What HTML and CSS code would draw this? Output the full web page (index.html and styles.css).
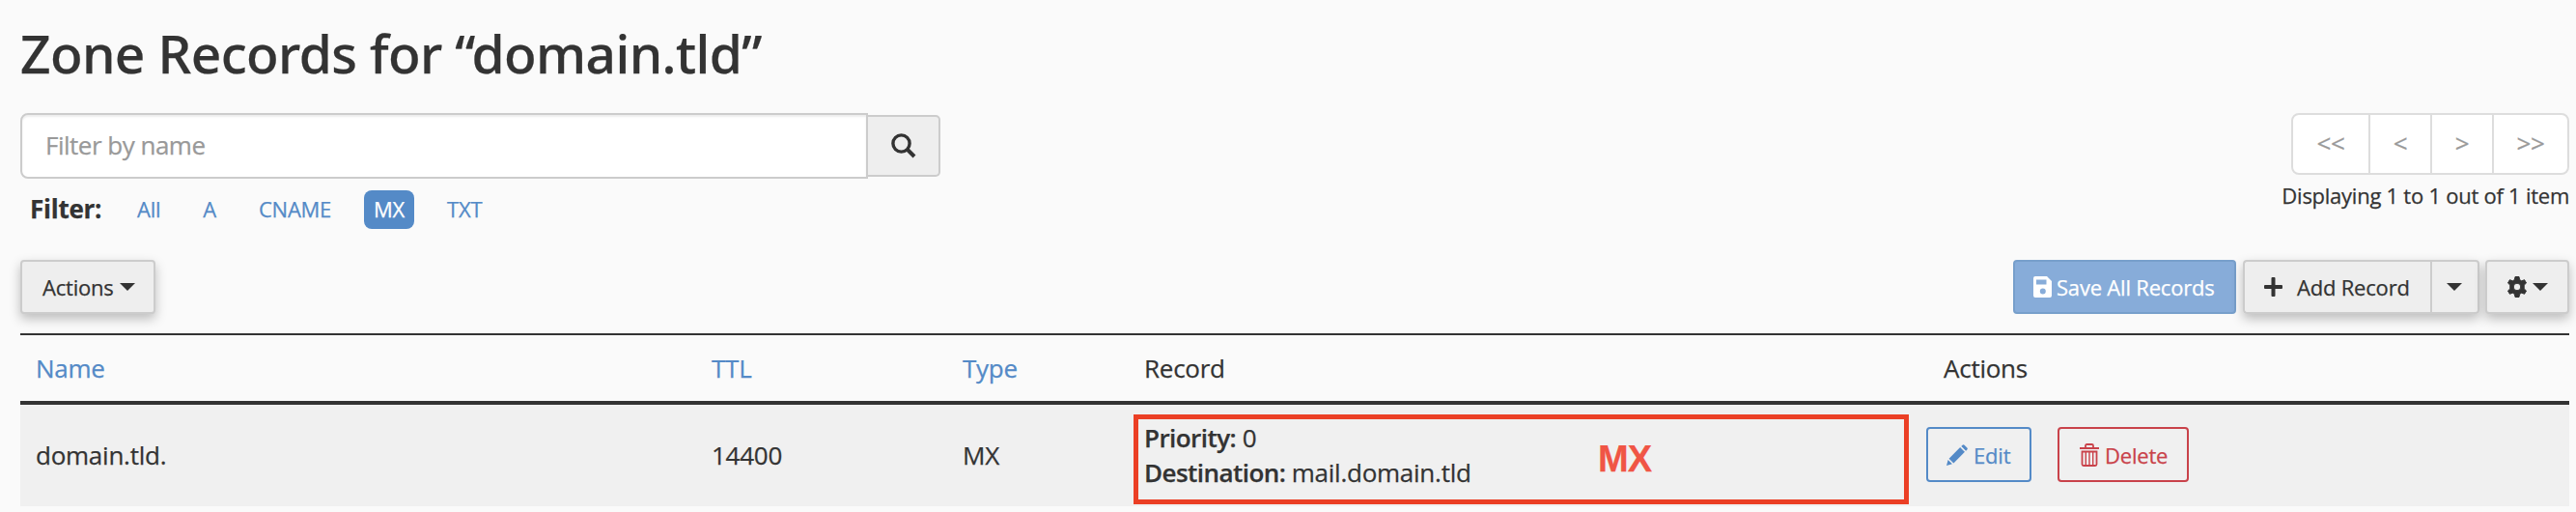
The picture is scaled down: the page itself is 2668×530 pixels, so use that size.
FILE: index.html
```html
<!DOCTYPE html>
<html lang="en">
<head>
    <meta charset="UTF-8">
    <meta name="viewport" content="width=device-width, initial-scale=1.0">
    <title>Zone Records</title>
    <link rel="stylesheet" href="styles.css">
</head>
<body>
    <div class="container">
        <h1>Zone Records for “domain.tld”</h1>

        <div class="top-section">
            <div class="search-section">
                <div class="search-group">
                    <input type="text" id="filterInput" placeholder="Filter by name">
                    <button class="search-btn" aria-label="Search">
                        <svg width="26" height="26" viewBox="0 0 26 26"><circle cx="10.500" cy="10.500" r="8.600" fill="none" stroke="#333" stroke-width="3.400"/><path d="M16.500 16.500L24 24" stroke="#333" stroke-width="4"/></svg>
                    </button>
                </div>
                <div class="filters">
                    <strong>Filter:</strong>
                    <a>All</a>
                    <a>A</a>
                    <a>CNAME</a>
                    <a class="active">MX</a>
                    <a>TXT</a>
                </div>
            </div>
            <div class="paging">
                <div class="pagination">
                    <span class="wide">&lt;&lt;</span>
                    <span>&lt;</span>
                    <span>&gt;</span>
                    <span class="wide">&gt;&gt;</span>
                </div>
                <div class="page-info">Displaying 1 to 1 out of 1 item</div>
            </div>
        </div>

        <div class="toolbar">
            <button class="btn actions-btn">Actions <i class="caret"></i></button>
            <div class="toolbar-right">
                <button class="btn btn-primary" disabled>
                    <svg width="19" height="22" viewBox="0 0 19 22"><path fill="#fff" fill-rule="evenodd" d="M2 0H14L19 5V20Q19 22 17 22H2Q0 22 0 20V2Q0 0 2 0ZM3 3.500V8.500H13.500V3.500ZM9.800 12.500A3 3 0 1 0 9.800 18.500A3 3 0 1 0 9.800 12.500Z"/></svg>
                    <span>Save All Records</span>
                </button>
                <div class="btn-group">
                    <button class="btn add-btn">
                        <svg width="19" height="20" viewBox="0 0 19 20"><path fill="#333" d="M7.500 1Q7.500 0 8.500 0H10.500Q11.500 0 11.500 1V8H18Q19 8 19 9V11Q19 12 18 12H11.500V19Q11.500 20 10.500 20H8.500Q7.500 20 7.500 19V12H1Q0 12 0 11V9Q0 8 1 8H7.500Z"/></svg>
                        <span>Add Record</span>
                    </button>
                    <button class="btn drop-btn"><i class="caret"></i></button>
                </div>
                <button class="btn gear-btn">
                    <svg width="20" height="22" viewBox="0 0 20 22"><path fill="#333" fill-rule="evenodd" stroke="#333" stroke-width="1" stroke-linejoin="round" d="M8 .5H12L12.600 3.600L14.600 4.800L17.600 3.700L19.500 7L17.200 9.100V12.900L19.500 15L17.600 18.300L14.600 17.200L12.600 18.400L12 21.500H8L7.400 18.400L5.400 17.200L2.400 18.300L.5 15L2.800 12.900V9.100L.5 7L2.400 3.700L5.400 4.800L7.400 3.600ZM10 7.200A3.800 3.800 0 1 0 10 14.800A3.800 3.800 0 1 0 10 7.200Z"/></svg>
                    <i class="caret"></i>
                </button>
            </div>
        </div>

        <table>
            <colgroup>
                <col class="col-name">
                <col class="col-ttl">
                <col class="col-type">
                <col class="col-record">
                <col>
            </colgroup>
            <thead>
                <tr>
                    <th><a>Name</a></th>
                    <th><a>TTL</a></th>
                    <th><a>Type</a></th>
                    <th>Record</th>
                    <th class="actions-head">Actions</th>
                </tr>
            </thead>
            <tbody>
                <tr>
                    <td>domain.tld.</td>
                    <td>14400</td>
                    <td>MX</td>
                    <td class="record">
                        <div><strong>Priority:</strong> 0</div>
                        <div><strong>Destination:</strong> mail.domain.tld</div>
                        <div class="highlight">MX</div>
                    </td>
                    <td class="row-actions">
                        <div class="action-group">
                            <button class="btn-outline edit">
                                <svg width="22" height="22" viewBox="0 0 23 23"><path fill="#548ac7" d="M0 23L1.700 16.800L6.200 21.300ZM2.700 15.300L14.800 3.200L19.800 8.200L7.700 20.300ZM16 2L17.300 .7Q18.300 -.3 19.400 .7L22.300 3.600Q23.300 4.700 22.300 5.700L21 7Z"/></svg>
                                <span>Edit</span>
                            </button>
                            <button class="btn-outline delete">
                                <svg width="20" height="24" viewBox="0 0 20 24"><g fill="none" stroke="#c9424a"><path stroke-width="1.800" d="M0 5H20M6 5V2.500Q6 1 7.500 1H12.500Q14 1 14 2.500V5M2.500 8.500V21.500Q2.500 23 4 23H16Q17.500 23 17.500 21.500V8.500Z"/><path stroke-width="1.400" d="M6.300 9V22M10 9V22M13.700 9V22"/></g></svg>
                                <span>Delete</span>
                            </button>
                        </div>
                    </td>
                </tr>
            </tbody>
        </table>
    </div>
</body>
</html>
```
FILE: styles.css
```css
* {
    box-sizing: border-box;
}
body {
    margin: 0;
    background: #fafafa;
    color: #333;
    font-family: "Open Sans", "Noto Sans", sans-serif;
    font-size: 26px;
    line-height: 36px;
    letter-spacing: -0.25px;
    -webkit-text-stroke: 0.25px;
}
.container {
    padding: 24px 7px 0 21px;
}
h1 {
    margin: 0 0 31px;
    font-family: "Noto Sans", "Open Sans", sans-serif;
    font-size: 55px;
    font-weight: 500;
    line-height: 62px;
    letter-spacing: -0.6px;
}
strong {
    font-weight: 600;
}
button {
    font-family: inherit;
    color: #333;
    margin: 0;
    letter-spacing: -0.2px;
    white-space: nowrap;
    cursor: pointer;
}
svg {
    display: block;
    flex-shrink: 0;
}
a {
    color: #548ac7;
}
.top-section {
    display: flex;
    justify-content: space-between;
    height: 152px;
}
.search-group {
    display: flex;
    align-items: center;
}
input {
    width: 878px;
    height: 68px;
    padding: 0 24px 2px;
    border: 2px solid #ccc;
    border-radius: 8px 0 0 8px;
    background: #fff;
    box-shadow: inset 0 2px 2px rgba(0, 0, 0, 0.075);
    font-family: inherit;
    font-size: 26px;
    letter-spacing: -0.5px;
}
input::placeholder {
    color: #999;
}
.search-btn {
    width: 75px;
    height: 64px;
    padding: 0 0 0 24px;
    border: 2px solid #ccc;
    border-left: none;
    border-radius: 0 5px 5px 0;
    background: #eee;
}
.filters {
    display: flex;
    align-items: center;
    gap: 24px;
    margin-top: 12px;
    padding-left: 10px;
}
.filters strong {
    width: 77px;
    font-weight: 700;
    line-height: 34px;
    margin-bottom: 2px;
}
.filters a {
    height: 40px;
    padding: 0 10px;
    border-radius: 8px;
    font-size: 22px;
    line-height: 38px;
    letter-spacing: -0.25px;
}
.filters .active {
    background: #548ac7;
    color: #fff;
}
.paging {
    display: flex;
    flex-direction: column;
    align-items: flex-end;
}
.pagination {
    display: flex;
    height: 64px;
    border: 2px solid #ddd;
    border-radius: 8px;
    background: #fff;
}
.pagination span {
    width: 64px;
    color: #999;
    line-height: 58px;
    text-align: center;
}
.pagination .wide {
    width: 78px;
}
.pagination span + span {
    border-left: 2px solid #ddd;
}
.page-info {
    margin-top: 3px;
    font-size: 22px;
}
.toolbar,
.toolbar-right {
    display: flex;
    justify-content: space-between;
}
.toolbar {
    margin-bottom: 20px;
}
.btn {
    display: flex;
    align-items: center;
    height: 56px;
    padding: 0 21px;
    border: 2px solid #ccc;
    border-radius: 4px;
    background: #eee;
    box-shadow: 0 5px 12px rgba(0, 0, 0, 0.25);
    font-size: 22px;
    line-height: 30px;
}
.actions-btn {
    width: 140px;
}
.caret {
    margin-left: 6px;
    border-top: 8px solid #333;
    border-left: 8px solid transparent;
    border-right: 8px solid transparent;
}
.btn-primary {
    width: 231px;
    margin-right: 7px;
    padding: 0 19px;
    gap: 5px;
    border-color: #779fcb;
    background: #87acd9;
    box-shadow: none;
    color: #fff;
}
.btn-group {
    display: flex;
    margin-right: 6px;
    border-radius: 4px;
    box-shadow: 0 5px 12px rgba(0, 0, 0, 0.25);
}
.btn-group .btn {
    box-shadow: none;
}
.add-btn {
    width: 194px;
    padding: 0 20px;
    gap: 15px;
    border-right: none;
    border-radius: 4px 0 0 4px;
}
.drop-btn {
    width: 51px;
    padding: 0 15px;
    border-radius: 0 4px 4px 0;
}
.drop-btn .caret {
    margin-left: 0;
}
.gear-btn {
    width: 87px;
}
table {
    width: 100%;
    border-collapse: separate;
    border-spacing: 0;
    table-layout: fixed;
    border-top: 2px solid #333;
}
.col-name {
    width: 699px;
}
.col-ttl {
    width: 260px;
}
.col-type {
    width: 188px;
}
.col-record {
    width: 812px;
}
th {
    height: 72px;
    padding: 0 16px 0 17px;
    border-bottom: 4px solid #333;
    font-weight: 400;
    text-align: left;
}
td {
    height: 105px;
    padding: 0 16px 2px 17px;
    background: #f0f0f0;
}
th:first-child,
td:first-child {
    padding-left: 16px;
}
.actions-head {
    padding-left: 33px;
}
.record {
    position: relative;
}
.record strong {
    letter-spacing: -0.55px;
}
/* annotation frame drawn over the record cell */
.highlight {
    position: absolute;
    top: 10px;
    left: 6px;
    width: 803px;
    height: 93px;
    padding-left: 476px;
    border: 5px solid #eb3f25;
    color: #f05545;
    font-family: "Liberation Sans", Arial, sans-serif;
    font-size: 38px;
    font-weight: 700;
    line-height: 82px;
    letter-spacing: -1px;
}
.row-actions {
    padding-left: 15px;
}
.action-group {
    display: flex;
    gap: 27px;
}
.btn-outline {
    display: flex;
    align-items: center;
    width: 109px;
    height: 57px;
    padding: 0 0 0 19px;
    gap: 6px;
    border: 2px solid #548ac7;
    border-radius: 4px;
    background: transparent;
    color: #548ac7;
    font-size: 22px;
}
.delete {
    width: 136px;
    padding-left: 21px;
    border-color: #c9424a;
    color: #c9424a;
}
```
